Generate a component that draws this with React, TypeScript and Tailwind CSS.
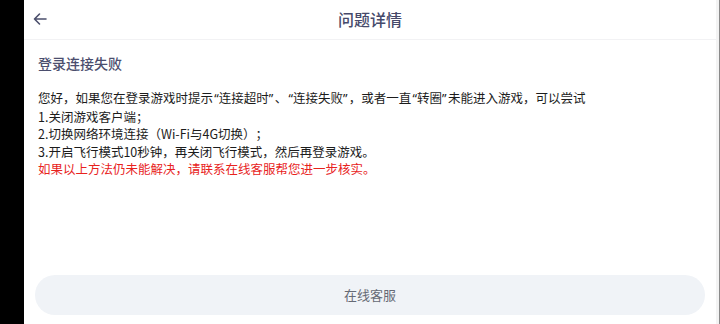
import React from 'react';

const font = { fontFamily: '"Noto Sans CJK SC", "Noto Sans", sans-serif' };

// Back arrow in the header
const BackArrow: React.FC = () => (
  <svg width="14" height="14" viewBox="0 0 14 14" fill="none">
    <path d="M13 7H1.5M6.5 2L1.5 7l5 5" stroke="#4b4f6c" strokeWidth="1.6" strokeLinecap="round" strokeLinejoin="round" />
  </svg>
);

// Narrow curly quotes, as the app shows them
const quoteFont = { fontFamily: '"Noto Sans", sans-serif' };
const L = () => (
  <span className="inline-block w-[5.8px] text-right" style={quoteFont}>
    “
  </span>
);
const R = () => (
  <span className="inline-block w-[5.8px] text-left" style={quoteFont}>
    ”
  </span>
);

const steps = [
  '1.关闭游戏客户端；',
  '2.切换网络环境连接（Wi-Fi与4G切换）；',
  '3.开启飞行模式10秒钟，再关闭飞行模式，然后再登录游戏。',
];

const App: React.FC = () => {
  return (
    <div lang="zh-CN" className="flex w-[720px] h-[324px] bg-black overflow-hidden" style={font}>
      {/* Left dark strip */}
      <div className="w-[24px] shrink-0" />

      {/* Page */}
      <div className="flex flex-1 flex-col bg-white">
        {/* Header */}
        <div className="relative flex h-[40px] items-center justify-center border-b border-[#f2f2f4]">
          <button className="absolute left-[9px] top-[12px] p-0">
            <BackArrow />
          </button>
          <span className="mt-[-2px] text-[16px] font-medium text-[#46496a]">问题详情</span>
        </div>

        {/* Content */}
        <div className="flex flex-1 flex-col px-[14px]">
          <h2 className="mt-[12px] text-[14px] leading-[22px] font-medium text-[#4b4e6e]">登录连接失败</h2>
          <div className="mt-[15px] text-[12.5px] leading-[17.6px] text-[#1c1c1c] [text-spacing-trim:space-all] [text-autospace:no-autospace]">
            <p>
              您好，如果您在登录游戏时提示<L />连接超时<R />、<L />连接失败<R />，或者一直<L />转圈<R />未能进入游戏，可以尝试
            </p>
            {steps.map((s) => (
              <p key={s}>{s}</p>
            ))}
            <p className="text-[#e8231d]">如果以上方法仍未能解决，请联系在线客服帮您进一步核实。</p>
          </div>
        </div>

        {/* Bottom button */}
        <div className="px-[11px] pb-[9px]">
          <button className="flex h-[40px] w-full items-center justify-center rounded-full bg-[#f0f3f7] text-[13px] text-[#666a75]">
            在线客服
          </button>
        </div>
      </div>

      {/* Right edge */}
      <div className="w-[3px] shrink-0 bg-[#f3f3f3]" />
      <div className="w-[1px] shrink-0 bg-[#8a8a8a]" />
    </div>
  );
};

export default App;
